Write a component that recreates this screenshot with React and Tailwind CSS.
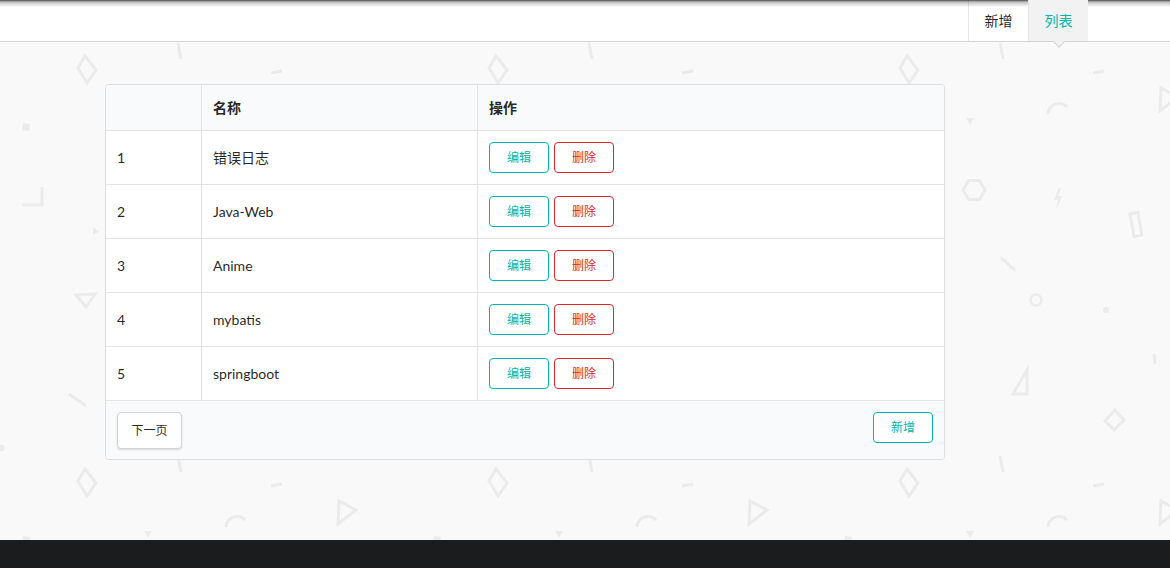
import React from 'react';

const rows = [
  { id: 1, name: '错误日志' },
  { id: 2, name: 'Java-Web' },
  { id: 3, name: 'Anime' },
  { id: 4, name: 'mybatis' },
  { id: 5, name: 'springboot' },
];

function Pattern() {
  return (
    <svg className="absolute inset-0 w-full h-full" aria-hidden="true">
      <defs>
        <pattern id="bgshapes" patternUnits="userSpaceOnUse" width="411" height="413">
          <g transform="translate(0,-42)" fill="none" stroke="#ebebeb" strokeWidth="3" strokeLinejoin="miter">
            <polygon points="85,56 96,70 87,83 78,68" />
            <line x1="178" y1="43" x2="181" y2="59" />
            <line x1="271" y1="73" x2="282" y2="71" />
            <polygon points="23,123 30,124 29,131 22,130" fill="#ebebeb" stroke="none" />
            <polyline points="42,187 42,205 22,205" />
            <polygon points="93,227 99,232 93,235" fill="#ebebeb" stroke="none" />
            <polygon points="76,295 95,294 86,307" />
            <line x1="69" y1="394" x2="86" y2="406" />
            <circle cx="1" cy="448" r="3.5" fill="#ebebeb" stroke="none" />
            <circle cx="412" cy="448" r="3.5" fill="#ebebeb" stroke="none" />
            <path d="M226,114 A11,11 0 0 1 245,107" />
            <polygon points="144,118 152,118 148,125" fill="#ebebeb" stroke="none" />
            <polygon points="339,88 356,97 338,111" />
            <polygon points="163,190 157.5,199.5 146.5,199.5 141,190 146.5,180.5 157.5,180.5" />
            <polygon points="237,188 232,200 236,200 234,210 240,196 236,196 239,188" fill="#ebebeb" stroke="none" />
            <rect x="310" y="213" width="8" height="23" transform="rotate(-10 314 225)" />
            <line x1="179" y1="258" x2="193" y2="270" />
            <circle cx="214" cy="300" r="5.5" strokeWidth="2.5" />
            <circle cx="284" cy="310" r="3" fill="#ebebeb" stroke="none" />
            <line x1="332" y1="354" x2="333" y2="364" />
            <polygon points="205,370 205,394 191,394" />
            <polygon points="293,410 302,420 292,430 283,421" />
          </g>
        </pattern>
      </defs>
      <rect width="100%" height="100%" fill="url(#bgshapes)" />
    </svg>
  );
}

function BasicButton({ color, children }) {
  const tone =
    color === 'red'
      ? 'border-[#db2828] text-[#db2828]'
      : 'border-[#00b5ad] text-[#00b5ad]';
  return (
    <button className={`w-[60px] h-[31px] border rounded-[4px] bg-white text-[12px] leading-none ${tone}`}>
      {children}
    </button>
  );
}

export default function App() {
  return (
    <div className="w-[1170px] h-[568px] flex flex-col font-[Lato,'Noto_Sans_CJK_SC',sans-serif] text-[rgba(0,0,0,0.87)]">
      <header className="h-[42px] shrink-0 bg-white border-b border-[#d4d4d5] flex justify-end pr-[82px] relative z-10">
        <div className="absolute inset-x-0 top-0 h-[7px] bg-[linear-gradient(to_bottom,rgba(0,0,0,0.7)_0px,rgba(0,0,0,0.25)_2px,rgba(0,0,0,0)_7px)]" />
        <div className="w-[60px] h-full border-l border-[#e6e6e6] flex items-center justify-center text-[14px]">新增</div>
        <div className="w-[60px] h-full border-l border-[#e6e6e6] bg-[#f2f2f2] flex items-center justify-center text-[14px] text-[#00b5ad] relative">
          列表
          <span className="absolute left-1/2 -bottom-[5px] -translate-x-1/2 w-[8px] h-[8px] rotate-45 bg-[#f2f2f2] border-r border-b border-[#d4d4d5]" />
        </div>
      </header>

      <main className="relative flex-1 bg-[#f9f9f9]">
        <Pattern />
        <div className="relative ml-[105px] mt-[42px] w-[840px] border border-[#dededf] rounded-[4px] overflow-hidden bg-white text-[14px]">
          <div className="flex h-[46px] bg-[#f9fafb] border-b border-[#e3e3e4] font-bold">
            <div className="w-[95px] px-[11px] flex items-center" />
            <div className="w-[276px] px-[11px] border-l border-[#e3e3e4] flex items-center">名称</div>
            <div className="flex-1 px-[11px] border-l border-[#e3e3e4] flex items-center">操作</div>
          </div>
          {rows.map((r) => (
            <div key={r.id} className="flex h-[54px] border-b border-[#e3e3e4]">
              <div className="w-[95px] px-[11px] flex items-center">{r.id}</div>
              <div className="w-[276px] px-[11px] border-l border-[#e3e3e4] flex items-center">{r.name}</div>
              <div className="flex-1 px-[11px] border-l border-[#e3e3e4] flex items-center gap-[5px]">
                <BasicButton>编辑</BasicButton>
                <BasicButton color="red">删除</BasicButton>
              </div>
            </div>
          ))}
          <div className="h-[58px] bg-[#f9fafb] px-[11px] pt-[11px] flex items-start justify-between">
            <button className="w-[65px] h-[37px] bg-white rounded-[4px] border border-[#d4d4d5] shadow-[0_1px_2px_rgba(34,36,38,0.15)] text-[12px] text-[rgba(0,0,0,0.87)]">
              下一页
            </button>
            <BasicButton>新增</BasicButton>
          </div>
        </div>
      </main>

      <footer className="h-[28px] shrink-0 bg-[#1b1c1d]" />
    </div>
  );
}
